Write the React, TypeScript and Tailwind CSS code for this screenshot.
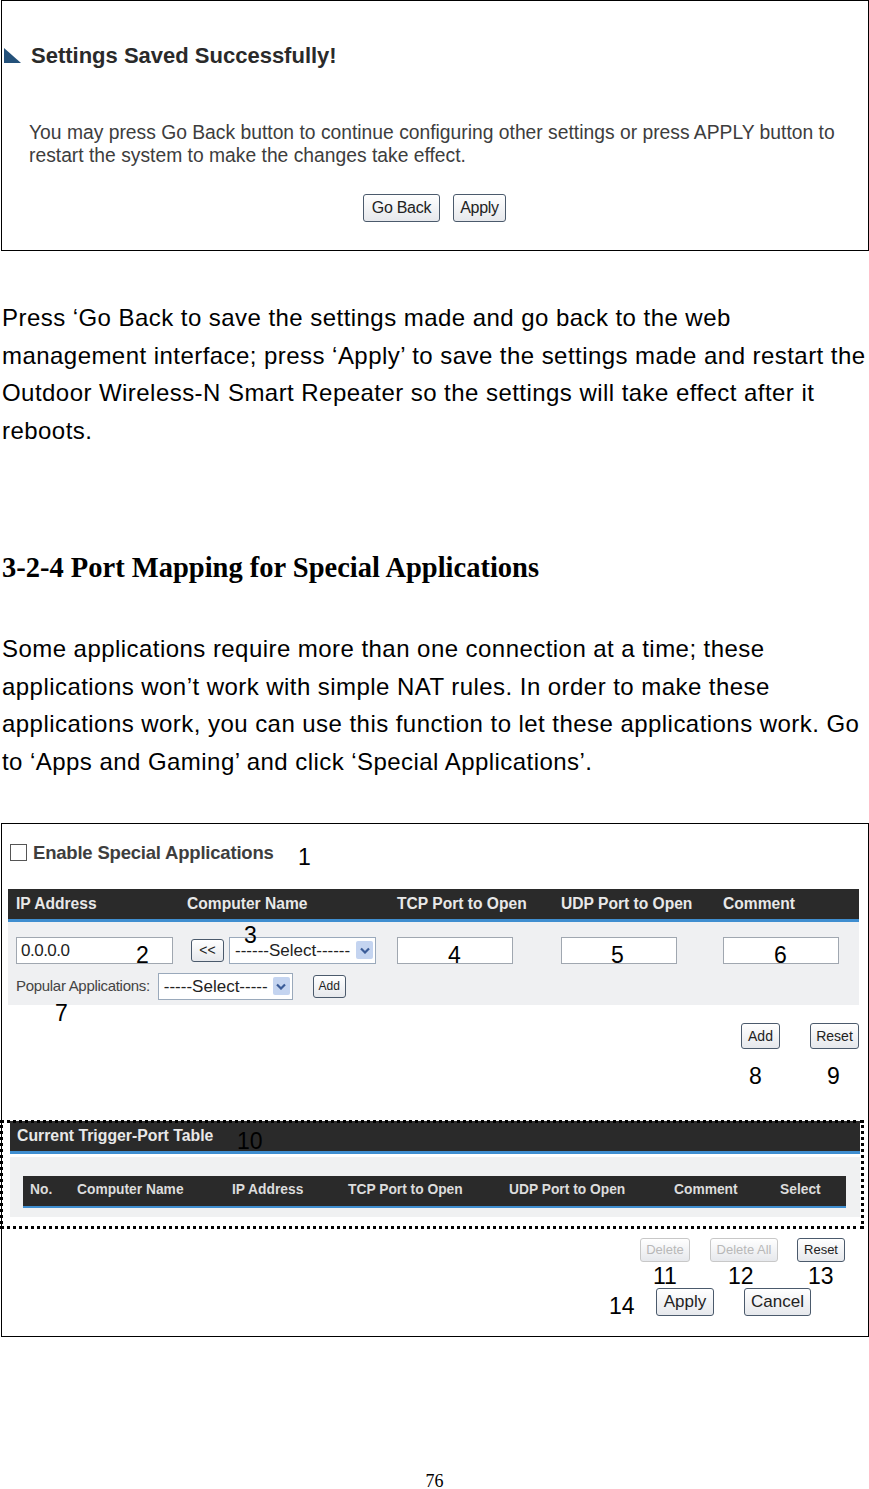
import React from "react";

const Btn = ({ children, className = "", disabled = false }: { children: React.ReactNode; className?: string; disabled?: boolean }) => (
  <div
    className={
      "flex items-center justify-center rounded-[3px] border bg-gradient-to-b from-white to-[#e6e8ec] leading-none " +
      (disabled ? "border-[#c8c8c8] text-[#b8b8b8] " : "border-[#4b5a6c] text-[#222] ") +
      className
    }
  >
    {children}
  </div>
);

const Sel = ({ text, className = "" }: { text: string; className?: string }) => (
  <div className={"flex items-center border border-[#9aa9bb] bg-white " + className}>
    <span className="flex-1 pl-[5px] text-[17px] leading-none text-[#222]">{text}</span>
    <div className="mr-[2px] flex h-[18px] w-[17px] items-center justify-center rounded-[2px] bg-[#c4d4f0]">
      <svg width="10" height="7" viewBox="0 0 10 7">
        <path d="M1 1.5 L5 5.5 L9 1.5" stroke="#3b5c98" strokeWidth="2.2" fill="none" />
      </svg>
    </div>
  </div>
);

const Num = ({ n, x, y }: { n: string; x: number; y: number }) => (
  <span className="absolute text-[23px] leading-none text-black" style={{ left: x, top: y }}>
    {n}
  </span>
);

const Lines = ({ lines, className = "" }: { lines: string[]; className?: string }) => (
  <div className={"ml-[2px] text-[24px] leading-[37.5px] tracking-[0.45px] " + className}>
    {lines.map((l) => (
      <div key={l} className="whitespace-nowrap">
        {l}
      </div>
    ))}
  </div>
);

export default function App() {
  return (
    <div className="relative w-[869px] bg-white text-black" style={{ fontFamily: '"Liberation Sans", Arial, sans-serif' }}>
      {/* top screenshot */}
      <div className="ml-[1px] h-[251px] w-[868px] border border-black">
        <div className="flex items-center pt-[38px]">
          <svg width="17" height="15" viewBox="0 0 17 15" className="ml-[2px]">
            <polygon points="0,0 0,15 17,15" fill="#24517a" />
          </svg>
          <span className="ml-[10px] text-[22px] font-bold text-[#2a2a2a]">Settings Saved Successfully!</span>
        </div>
        <p className="ml-[27px] mt-[49px] whitespace-nowrap text-[19.3px] leading-[23px] text-[#3d3d3d]">
          You may press Go Back button to continue configuring other settings or press APPLY button to
          <br />
          restart the system to make the changes take effect.
        </p>
        <div className="mt-[27px] flex gap-[13px] pl-[361px]">
          <Btn className="h-[28px] w-[77px] text-[16px] tracking-[-0.3px]">Go Back</Btn>
          <Btn className="h-[28px] w-[53px] text-[16px] tracking-[-0.3px]">Apply</Btn>
        </div>
      </div>

      <Lines
        className="mt-[48px]"
        lines={[
          "Press ‘Go Back to save the settings made and go back to the web",
          "management interface; press ‘Apply’ to save the settings made and restart the",
          "Outdoor Wireless-N Smart Repeater so the settings will take effect after it",
          "reboots.",
        ]}
      />

      <h2
        className="ml-[2px] mt-[102px] whitespace-nowrap text-[28.5px] font-bold leading-[34px]"
        style={{ fontFamily: '"Liberation Serif", "Times New Roman", serif' }}
      >
        3-2-4 Port Mapping for Special Applications
      </h2>

      <Lines
        className="mt-[45px]"
        lines={[
          "Some applications require more than one connection at a time; these",
          "applications won’t work with simple NAT rules. In order to make these",
          "applications work, you can use this function to let these applications work. Go",
          "to ‘Apps and Gaming’ and click ‘Special Applications’.",
        ]}
      />

      {/* second screenshot */}
      <div className="relative ml-[1px] mt-[43px] h-[514px] w-[868px] border border-black">
        <div className="flex items-center pl-[8px] pt-[15px]">
          <div className="h-[17px] w-[17px] border border-[#555] bg-white" />
          <span className="ml-[6px] text-[18.5px] font-bold tracking-[-0.2px] text-[#3e3e3e]">Enable Special Applications</span>
        </div>

        <div className="ml-[6px] mt-[22px] w-[851px]">
          <div className="flex h-[33px] items-center border-b-[3px] border-[#3f8ed0] bg-[#2a2a2a] text-[15.6px] font-bold text-[#e8e8e8]">
            <span className="ml-[8px] w-[171px]">IP Address</span>
            <span className="w-[210px]">Computer Name</span>
            <span className="w-[164px]">TCP Port to Open</span>
            <span className="w-[162px]">UDP Port to Open</span>
            <span>Comment</span>
          </div>
          <div className="h-[83px] bg-[#eff0f2]">
            <div className="flex items-center pt-[15px]">
              <div className="ml-[8px] flex h-[27px] w-[157px] items-center border border-[#a0a7b0] bg-white pl-[4px] text-[17px] tracking-[-0.5px] text-[#222]">
                0.0.0.0
              </div>
              <Btn className="ml-[18px] h-[23px] w-[33px] text-[14px]">&lt;&lt;</Btn>
              <Sel text="------Select------" className="ml-[5px] h-[27px] w-[147px]" />
              <div className="ml-[21px] h-[27px] w-[116px] border border-[#a0a7b0] bg-white" />
              <div className="ml-[48px] h-[27px] w-[116px] border border-[#a0a7b0] bg-white" />
              <div className="ml-[46px] h-[27px] w-[116px] border border-[#a0a7b0] bg-white" />
            </div>
            <div className="mt-[9px] flex items-center">
              <span className="ml-[8px] text-[15px] tracking-[-0.3px] text-[#444]">Popular Applications:</span>
              <Sel text="-----Select-----" className="ml-[8px] h-[27px] w-[135px]" />
              <Btn className="ml-[20px] h-[23px] w-[33px] text-[12px]">Add</Btn>
            </div>
          </div>
        </div>

        <div className="mt-[18px] flex justify-end gap-[30px] pr-[9px]">
          <Btn className="h-[26px] w-[39px] text-[14px]">Add</Btn>
          <Btn className="h-[26px] w-[49px] text-[14px]">Reset</Btn>
        </div>

        {/* trigger-port table */}
        <div className="relative -ml-[2px] mt-[71px] h-[109px] w-[864px]">
          <div className="ml-[10px] w-[850px] pt-[1px]">
            <div className="flex h-[33px] items-center border-b-[3px] border-[#3f8ed0] bg-[#2a2a2a] text-[15.8px] font-bold text-[#e8e8e8]">
              <span className="ml-[7px]">Current Trigger-Port Table</span>
            </div>
            <div className="mt-[3px] h-[60px] bg-[#f0f1f2] pt-[19px]">
              <div className="ml-[13px] flex h-[32px] w-[823px] items-center border-b-[2px] border-[#3f8ed0] bg-[#2a2a2a] text-[13.8px] font-bold text-[#dcdcdc]">
                <span className="ml-[7px] w-[47px]">No.</span>
                <span className="w-[155px]">Computer Name</span>
                <span className="w-[116px]">IP Address</span>
                <span className="w-[161px]">TCP Port to Open</span>
                <span className="w-[165px]">UDP Port to Open</span>
                <span className="w-[106px]">Comment</span>
                <span>Select</span>
              </div>
            </div>
          </div>
          <div className="pointer-events-none absolute inset-0 border-[3px] border-dotted border-black" />
        </div>

        <div className="mt-[9px] flex justify-end pr-[23px]">
          <Btn disabled className="h-[24px] w-[50px] text-[13px]">Delete</Btn>
          <Btn disabled className="ml-[20px] h-[24px] w-[68px] text-[13px]">Delete All</Btn>
          <Btn className="ml-[19px] h-[24px] w-[48px] text-[13px]">Reset</Btn>
        </div>
        <div className="mt-[26px] flex pl-[654px]">
          <Btn className="h-[28px] w-[58px] text-[17px]">Apply</Btn>
          <Btn className="ml-[30px] h-[28px] w-[67px] text-[17px]">Cancel</Btn>
        </div>

        <Num n="1" x={296} y={22} />
        <Num n="2" x={134} y={120} />
        <Num n="3" x={242} y={100} />
        <Num n="4" x={446} y={120} />
        <Num n="5" x={609} y={120} />
        <Num n="6" x={772} y={120} />
        <Num n="7" x={53} y={178} />
        <Num n="8" x={747} y={241} />
        <Num n="9" x={825} y={241} />
        <Num n="10" x={235} y={306} />
        <Num n="11" x={651} y={441} />
        <Num n="12" x={726} y={441} />
        <Num n="13" x={806} y={441} />
        <Num n="14" x={607} y={471} />
      </div>

      <div
        className="mt-[135px] text-center text-[18px] leading-[18px]"
        style={{ fontFamily: '"Liberation Serif", "Times New Roman", serif' }}
      >
        76
      </div>
    </div>
  );
}
